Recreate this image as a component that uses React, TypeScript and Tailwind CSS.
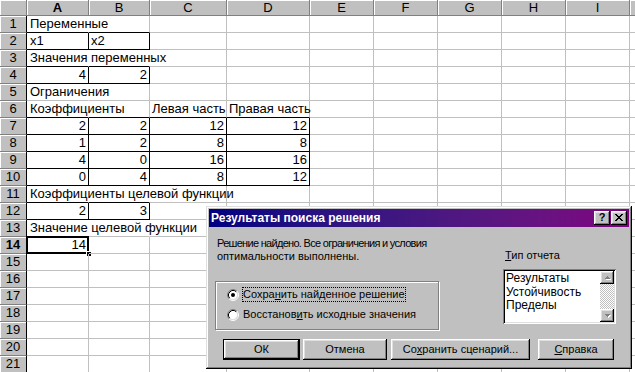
import React from "react";

const colW = ["w-[62px]", "w-[61px]", "w-[77px]", "w-[83px]", "w-[64px]", "w-[64px]", "w-[64px]", "w-[64px]", "w-[64px]"];
const colNames = ["A", "B", "C", "D", "E", "F", "G", "H", "I"];

const data: Record<number, (string | number | null)[]> = {
  1: ["Переменные"],
  2: ["x1", "x2"],
  3: ["Значения переменных"],
  4: [4, 2],
  5: ["Ограничения"],
  6: ["Коэффициенты", null, "Левая часть", "Правая часть"],
  7: [2, 2, 12, 12],
  8: [1, 2, 8, 8],
  9: [4, 0, 16, 16],
  10: [0, 4, 8, 12],
  11: ["Коэффициенты целевой функции"],
  12: [2, 3],
  13: ["Значение целевой функции"],
  14: [14],
};

// cells with a thin black box around them
const boxed = new Set([
  "2-0", "2-1", "4-0", "4-1",
  "7-0", "7-1", "7-2", "7-3", "8-0", "8-1", "8-2", "8-3",
  "9-0", "9-1", "9-2", "9-3", "10-0", "10-1", "10-2", "10-3",
  "12-0", "12-1", "14-0",
]);

// gridline hidden because text runs over into the next cell
const spill = new Set(["1-0", "3-0", "3-1", "5-0", "6-0", "11-0", "11-1", "13-0", "13-1"]);

const hdr = "bg-[#c0c0c0] border-[#808080] shadow-[inset_1px_1px_0_#fff]";

function Cell({ r, c }: { r: number; c: number }) {
  const v = (data[r] ?? [])[c];
  const box = (rr: number, cc: number) => boxed.has(`${rr}-${cc}`);
  const right = box(r, c) || box(r, c + 1) ? "border-r-black" : spill.has(`${r}-${c}`) ? "border-r-transparent" : "border-r-[#c0c0c0]";
  const bottom = box(r, c) || box(r + 1, c) ? "border-b-black" : "border-b-[#c0c0c0]";
  const num = typeof v === "number";
  const selected = r === 14 && c === 0;
  return (
    <div className={`${colW[c]} shrink-0 relative flex border-r border-b ${right} ${bottom} text-[13px] leading-[16px] whitespace-nowrap ${num ? "justify-end pr-[2px]" : c === 0 ? "pl-[3px]" : "pl-[2px]"}`}>
      {v !== null && v !== undefined ? <span>{v}</span> : null}
      {selected ? (
        <>
          <div className="absolute -inset-[1px] border-2 border-black" />
          <div className="absolute -right-[4px] -bottom-[4px] w-[6px] h-[6px] bg-black border border-white" />
        </>
      ) : null}
    </div>
  );
}

function Sheet() {
  const rows = Array.from({ length: 21 }, (_, i) => i + 1);
  return (
    <div className="flex flex-col">
      <div className="flex h-[16px] shrink-0">
        <div className={`w-[27px] shrink-0 border-r border-b ${hdr}`} />
        {colNames.map((n, c) => (
          <div key={n} className={`${colW[c]} shrink-0 border-r border-b ${hdr} flex items-center justify-center text-[13px] leading-[15px] ${c === 0 ? "font-bold" : ""}`}>
            {n}
          </div>
        ))}
        <div className={`flex-1 border-b ${hdr}`} />
      </div>
      {rows.map((r) => (
        <div key={r} className="flex h-[17px] shrink-0">
          <div className={`w-[27px] shrink-0 border-r border-b border-r-black ${hdr} flex items-center justify-center text-[13px] leading-[16px] ${r === 14 ? "font-bold" : ""}`}>
            {r}
          </div>
          {colW.map((_, c) => (
            <Cell key={c} r={r} c={c} />
          ))}
          <div className="flex-1 border-b border-b-[#c0c0c0]" />
        </div>
      ))}
    </div>
  );
}

function Pix({ rows, color }: { rows: string[]; color: string }) {
  const w = rows[0].length;
  const h = rows.length;
  return (
    <svg width={w} height={h} viewBox={`0 0 ${w} ${h}`} shapeRendering="crispEdges">
      {rows.flatMap((row, y) =>
        row.split("").map((ch, x) => (ch === "#" ? <rect key={`${x}-${y}`} x={x} y={y} width={1} height={1} fill={color} /> : null))
      )}
    </svg>
  );
}

const closeX = ["##....##", ".##..##.", "..####..", "...##...", "..####..", ".##..##.", "##....##"];
const arrowUp = ["..#..", ".###.", "#####"];
const arrowDown = ["#####", ".###.", "..#.."];

const bevel = "shadow-[inset_-1px_-1px_0_#000,inset_1px_1px_0_#fff,inset_-2px_-2px_0_#808080,inset_2px_2px_0_#dfdfdf]";

function Radio({ checked }: { checked?: boolean }) {
  return (
    <svg width="12" height="12" viewBox="0 0 12 12" className="shrink-0">
      <circle cx="6" cy="6" r="4.5" fill="#fff" />
      <path d="M2.11 9.89A5.5 5.5 0 0 1 9.89 2.11" fill="none" stroke="#808080" />
      <path d="M9.89 2.11A5.5 5.5 0 0 1 2.11 9.89" fill="none" stroke="#fff" />
      <path d="M2.82 9.18A4.5 4.5 0 0 1 9.18 2.82" fill="none" stroke="#000" />
      <path d="M9.18 2.82A4.5 4.5 0 0 1 2.82 9.18" fill="none" stroke="#dfdfdf" />
      {checked ? <circle cx="6" cy="6" r="2" fill="#000" /> : null}
    </svg>
  );
}

function ArrowBtn({ up }: { up?: boolean }) {
  return (
    <div className={`h-[13px] w-full bg-[#c0c0c0] ${bevel} flex items-center justify-center`}>
      <div className="relative">
        <div className="absolute left-[1px] top-[1px]">
          <Pix rows={up ? arrowUp : arrowDown} color="#fff" />
        </div>
        <div className="relative">
          <Pix rows={up ? arrowUp : arrowDown} color="#808080" />
        </div>
      </div>
    </div>
  );
}

function SolverDialog() {
  return (
    <div className="absolute left-[206px] top-[206px] w-[426px] h-[163px] p-[3px] bg-[#c0c0c0] flex flex-col text-[11px] text-black shadow-[inset_-1px_-1px_0_#000,inset_1px_1px_0_#dfdfdf,inset_-2px_-2px_0_#808080,inset_2px_2px_0_#fff]">
      <div className="h-[18px] shrink-0 flex items-center pl-[2px] pr-[2px] bg-linear-to-r from-[#000080] to-[#800080]">
        <span className="text-white font-bold text-[12px] leading-[18px]">Результаты поиска решения</span>
        <div className="ml-auto flex gap-[1px]">
          <div className={`w-[16px] h-[14px] bg-[#c0c0c0] ${bevel} flex items-center justify-center text-[11px] font-bold leading-none pb-[1px]`}>?</div>
          <div className={`w-[16px] h-[14px] bg-[#c0c0c0] ${bevel} flex items-center justify-center pb-[1px]`}>
            <Pix rows={closeX} color="#000" />
          </div>
        </div>
      </div>

      <div className="flex">
        <div className="pl-[6px]">
          <div className="mt-[10px] ml-[2px] leading-[13px] whitespace-nowrap">
            <div className="tracking-[-0.7px]">Решение найдено. Все ограничения и условия</div>
            <div>оптимальности выполнены.</div>
          </div>
          <div className="mt-[18px] w-[224px] h-[49px] border border-[#808080] shadow-[1px_1px_0_#fff,inset_1px_1px_0_#fff] pl-[11px] pt-[5px] flex flex-col gap-[5px]">
            <div className="flex items-center h-[15px]">
              <Radio checked />
              <span className="ml-[3px] border border-dotted border-black leading-[13px]">
                Сохра<u>н</u>ить найденное решение
              </span>
            </div>
            <div className="flex items-center h-[15px]">
              <Radio />
              <span className="ml-[3px] border border-transparent leading-[13px]">
                Восстанов<u>и</u>ть исходные значения
              </span>
            </div>
          </div>
        </div>

        <div className="ml-auto mr-[13px] mt-[22px]">
          <div className="ml-[2px] leading-[13px]">
            <u>Т</u>ип отчета
          </div>
          <div className="mt-[7px] w-[113px] h-[55px] bg-white flex shadow-[inset_1px_1px_0_#808080,inset_-1px_-1px_0_#fff,inset_2px_2px_0_#000,inset_-2px_-2px_0_#dfdfdf] p-[2px]">
            <div className="flex-1 pl-[1px] pt-[1px] text-[12px] leading-[13.5px]">
              <div>Результаты</div>
              <div>Устойчивость</div>
              <div>Пределы</div>
            </div>
            <div className="w-[14px] flex flex-col bg-[image:repeating-conic-gradient(#c0c0c0_0_25%,#fff_0_50%)] bg-[length:2px_2px]">
              <ArrowBtn up />
              <div className="flex-1" />
              <ArrowBtn />
            </div>
          </div>
        </div>
      </div>

      <div className="flex mt-[9px] pl-[14px] items-start">
        <div className="w-[77px] h-[21px] border border-black">
          <div className={`w-full h-full ${bevel} flex items-center justify-center`}>ОК</div>
        </div>
        <div className={`ml-[3px] w-[84px] h-[21px] ${bevel} flex items-center justify-center`}>Отмена</div>
        <div className={`ml-[4px] w-[139px] h-[21px] ${bevel} flex items-center justify-center`}>
          Со<u>х</u>ранить сценарий...
        </div>
        <div className={`ml-[8px] w-[76px] h-[21px] ${bevel} flex items-center justify-center`}>
          <u>С</u>правка
        </div>
      </div>
    </div>
  );
}

export default function App() {
  return (
    <div className="relative w-[635px] h-[372px] overflow-hidden bg-white text-black font-['Liberation_Sans',Arial,sans-serif]">
      <Sheet />
      <SolverDialog />
    </div>
  );
}
